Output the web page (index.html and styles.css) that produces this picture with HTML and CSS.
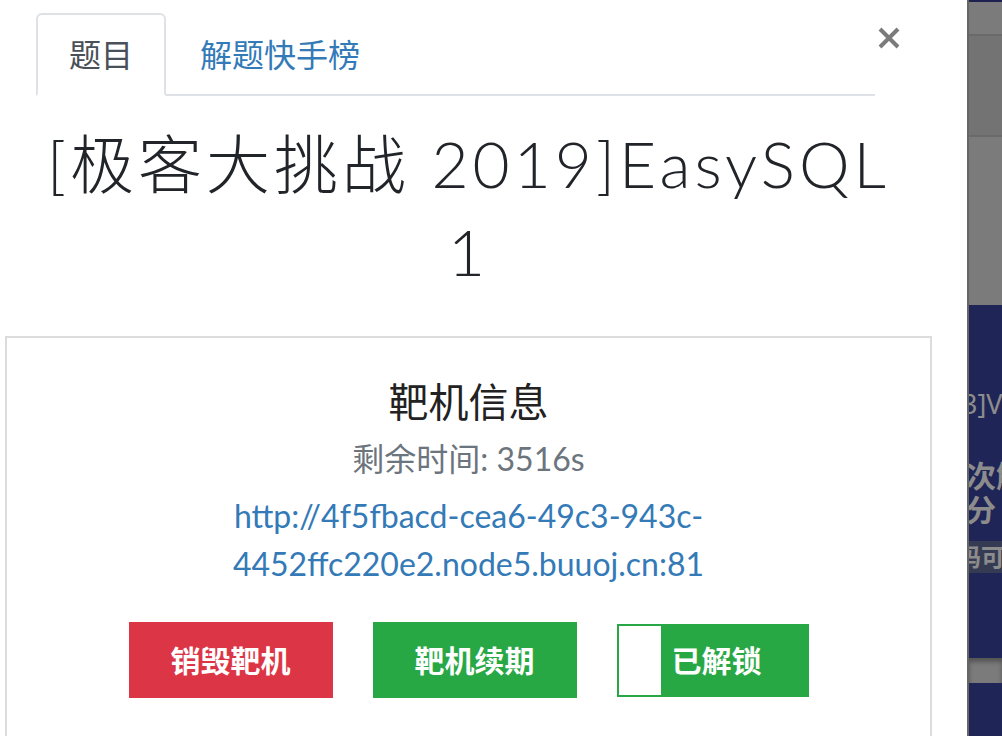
FILE: index.html
```html
<!DOCTYPE html>
<html lang="zh-CN">
<head>
<meta charset="utf-8">
<title>[极客大挑战 2019]EasySQL 1</title>
<link rel="stylesheet" href="styles.css">
</head>
<body>
<div class="modal">
    <div class="modal-head">
        <ul class="nav-tabs">
            <li class="tab active">题目</li>
            <li class="tab"><a href="javascript:void(0)">解题快手榜</a></li>
        </ul>
        <a class="close" href="javascript:void(0)">
            <svg width="22" height="22" viewBox="0 0 22 22"><path d="M2 2L20 20M20 2L2 20" stroke="#7b7b7b" stroke-width="4" fill="none"/></svg>
        </a>
    </div>
    <div class="modal-body">
        <h3 class="chal-name">[极客大挑战 2019]EasySQL<br>1</h3>
        <div class="card">
            <h4 class="card-title">靶机信息</h4>
            <p class="time">剩余时间: 3516s</p>
            <p class="url"><a href="javascript:void(0)">http://4f5fbacd-cea6-49c3-943c-4452ffc220e2.node5.buuoj.cn:81</a></p>
            <div class="btns">
                <a class="btn btn-red" href="javascript:void(0)">销毁靶机</a>
                <a class="btn btn-green" href="javascript:void(0)">靶机续期</a>
                <a class="btn btn-toggle" href="javascript:void(0)"><span class="knob"></span><span class="label">已解锁</span></a>
            </div>
        </div>
    </div>
</div>
<div class="backdrop">
    <div class="bd-top"></div>
    <div class="bd-row bd-row1"></div>
    <div class="bd-row bd-row2"></div>
    <div class="bd-row bd-row3"></div>
    <div class="bd-page">
        <p class="bd-name">3]V</p>
        <p class="bd-solve">次解</p>
        <p class="bd-score">分</p>
        <p class="bd-tag">码可</p>
        <div class="bd-bar"></div>
    </div>
</div>
</body>
</html>
```
FILE: styles.css
```css
html,body{ height:736px; overflow:hidden;}
body,ul,li,h3,h4,p,a{ margin:0; padding:0;}
a{ text-decoration:none;}
li{ list-style:none;}
body{ display:flex; background:#1f2557; font-family:"Lato","Noto Sans CJK SC",sans-serif; color:#212529;}

/* 弹窗 */
.modal{ width:967px; height:736px; flex:none; background:#fff; padding-top:13px; box-sizing:border-box;}
.modal-head{ display:flex; align-items:flex-start;}
.nav-tabs{ display:flex; width:839px; margin-left:36px; border-bottom:2px solid #dee2e6;}
.tab{ height:79px; line-height:79px; padding:0 32px; font-size:32px; border:2px solid transparent; border-radius:6px 6px 0 0; margin-bottom:-2px;}
.tab:first-child{ padding:0 31px;}
.tab a{ color:#337ab7;}
.tab.active{ color:#495057; border-color:#dee2e6 #dee2e6 #fff;}
.close{ display:block; margin:14px 0 0 3px; line-height:0;}

.modal-body{ width:927px; padding-left:5px;}
.chal-name{ margin-top:24px; text-align:center; font-size:64px; line-height:88px; font-weight:300; letter-spacing:4px;}

.card{ margin-top:40px; border:2px solid #dcdcdc; border-bottom:none; padding-top:40px; height:400px; box-sizing:border-box; text-align:center;}
.card-title{ font-size:40px; line-height:48px; font-weight:400; color:#222;}
.time{ margin-top:15px; font-size:32px; line-height:36px; color:#6c757d;}
.url{ width:500px; margin:15px auto 0; font-size:32px; line-height:48px;}
.url a{ color:#337ab7;}

.btns{ display:flex; justify-content:center; align-items:flex-start; gap:40px; margin-top:34px;}
.btn{ display:block; width:204px; height:76px; line-height:76px; color:#fff; font-size:30px; font-weight:bold;}
.btn-red{ background:#dc3545;}
.btn-green{ background:#28a745;}
.btn-toggle{ display:flex; width:188px; height:69px; line-height:69px; margin-top:2px; border:2px solid #28a745; background:#28a745;}
.knob{ width:42px; background:#fff;}
.label{ padding-left:11px;}

/* 右侧遮罩下的页面 */
.backdrop{ flex:1; overflow:hidden; border-left:2px solid #666;}
.bd-top{ height:2px; background:#1c2150;}
.bd-row{ background:#7b7b7b; border-bottom:2px solid #6a6a6a;}
.bd-row1{ height:32px;}
.bd-row2{ height:99px; background:#737373;}
.bd-row3{ height:168px; border-bottom:none;}
.bd-page{ padding-top:84px; color:#8c8c8c; white-space:nowrap; font-family:"Noto Sans","Noto Sans CJK SC",sans-serif;}
.bd-name{ font-size:27px; line-height:30px; margin-left:-7px;}
.bd-solve,.bd-score{ font-size:30px; line-height:34px; font-weight:bold; margin-left:-3px;}
.bd-solve{ margin-top:40px;}
.bd-tag{ margin-top:14px; height:32px; line-height:32px; font-size:24px; font-weight:bold; background:#343b52; margin-left:-12px;}
.bd-bar{ margin-top:85px; height:25px; background:#7b7b7b; box-shadow:inset 0 4px 4px #555;}
```
